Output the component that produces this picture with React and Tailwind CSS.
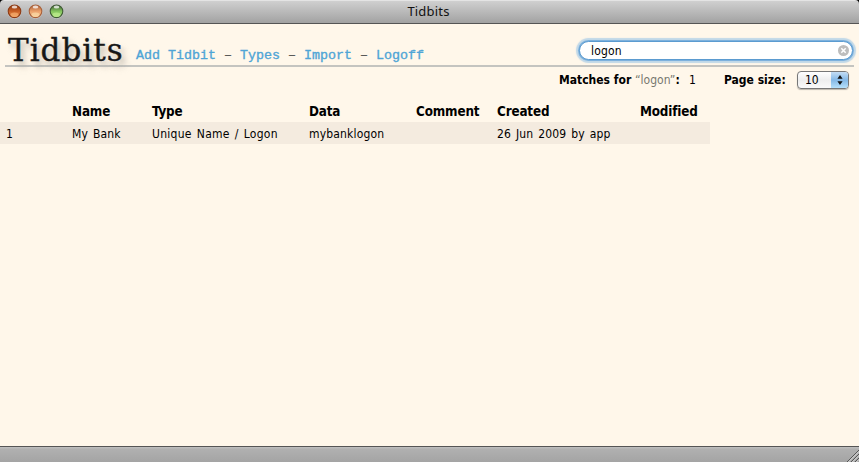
const sans = "font-['DejaVu_Sans_Condensed','DejaVu_Sans',sans-serif] [font-stretch:condensed]";

function TrafficLight({ id, rim, body, glow }) {
  return (
    <svg width="15" height="15" viewBox="0 0 15 15" className="block">
      <defs>
        <linearGradient id={id} x1="0" y1="0" x2="0" y2="1">
          <stop offset="0" stopColor={rim} />
          <stop offset="0.5" stopColor={body} />
          <stop offset="1" stopColor={glow} />
        </linearGradient>
      </defs>
      <circle cx="7.5" cy="8" r="6.8" fill="#dedede" opacity="0.7" />
      <circle cx="7.5" cy="7.3" r="6.3" fill={`url(#${id})`} stroke={rim} strokeWidth="1.1" />
      <ellipse cx="7.5" cy="3" rx="2.8" ry="1.6" fill="#fff" opacity="0.75" />
      <ellipse cx="7.5" cy="10.8" rx="3.8" ry="2.3" fill={glow} opacity="0.8" />
    </svg>
  );
}

function TitleBar() {
  return (
    <header className="relative flex h-6 shrink-0 items-center justify-center border-b border-[#555] bg-linear-to-b from-[#d2d2d2] to-[#a2a2a2] shadow-[inset_0_1px_0_#e4e4e4]">
      <div className="absolute top-[4px] left-[7px] flex gap-[6px]">
        <TrafficLight id="close" rim="#8c3a14" body="#c95f24" glow="#f2a868" />
        <TrafficLight id="minimize" rim="#a8603a" body="#eba06a" glow="#f9d4a0" />
        <TrafficLight id="zoom" rim="#3f5a35" body="#82c45c" glow="#b8ea88" />
      </div>
      <h1 className="-mt-[2px] mr-[2px] font-['Noto_Sans',sans-serif] text-[13px] leading-[22px] tracking-[0.2px] text-[#111]">Tidbits</h1>
      <svg width="4" height="4" className="absolute top-0 left-0"><path d="M0 0H4Q0 0 0 4Z" fill="#000" /></svg>
      <svg width="4" height="4" className="absolute top-0 right-0"><path d="M4 0H0Q4 0 4 4Z" fill="#000" /></svg>
    </header>
  );
}

function Banner() {
  return (
    <div className="ml-[5px] mr-[5px] flex h-[43px] shrink-0 border-b-2 border-[#c4c4c0]">
      <div className="ml-[3px] w-[128px] font-['DejaVu_Serif',serif] text-[31px] leading-[53px] tracking-[1px] whitespace-nowrap text-[#161616] [-webkit-text-stroke:0.4px_#222] [text-shadow:3px_4px_5px_#aaa59b88,5px_7px_6px_#aaa59b55]">
        Tidbits
      </div>
      <nav className="w-[443px] pt-[24px] font-['Liberation_Mono',monospace] text-[13.33px] leading-[15px] whitespace-pre text-[#4fa5d6] [-webkit-text-stroke:0.35px]">
        <a>Add Tidbit</a><span className="text-[#555]"> – </span><a>Types</a><span className="text-[#555]"> – </span><a>Import</a><span className="text-[#555]"> – </span><a>Logoff</a>
      </nav>
      <div className={`mt-[17px] -mr-1 flex h-[19px] w-[274px] shrink-0 items-center justify-between rounded-full border border-[#5b9bd0] bg-white pr-[3px] pl-[11px] shadow-[0_0_0_1px_#7db1dd,0_0_1px_3px_#a3c9e6b0] ${sans}`}>
        <span className="pt-[2px] text-[12px] leading-[17px] tracking-[0.2px]">logon</span>
        <svg width="11" height="11" viewBox="0 0 11 11">
          <circle cx="5.5" cy="5.5" r="5.5" fill="#bdbdbd" />
          <path d="M3.3 3.3 7.7 7.7M7.7 3.3 3.3 7.7" stroke="#fff" strokeWidth="1.5" />
        </svg>
      </div>
    </div>
  );
}

function Summary() {
  return (
    <div className={`flex h-[34px] shrink-0 pt-[5px] pl-[559px] text-[12px] leading-[17px] whitespace-nowrap ${sans}`}>
      <div className="w-[130px]"><b>Matches for </b><span className="text-[#77776f]">“logon”</span><b>:</b></div>
      <span className="w-[35px]">1</span>
      <b className="w-[73px]">Page size:</b>
      <div className="-mt-px flex h-[18px] w-[52px] overflow-hidden rounded-[4px] border border-[#777] bg-linear-to-b from-white via-[#eee] to-[#fafafa] shadow-[0_1px_1px_#0004]">
        <span className="w-[33px] pl-[7px] leading-[17px]">10</span>
        <div className="flex flex-1 items-center justify-center bg-linear-to-b from-[#c4ddf4] via-[#84b8e6] to-[#b5e0fb]">
          <svg width="6" height="10" viewBox="0 0 6 10"><path d="M3 0 5.6 3.8H.4ZM3 10 .4 6.2H5.6Z" fill="#111" /></svg>
        </div>
      </div>
    </div>
  );
}

const columns = "grid grid-cols-[72px_80px_157px_107px_81px_143px_70px] w-[710px] whitespace-nowrap";

function Results() {
  return (
    <div className={`flex-1 ${sans}`}>
      <div className={`${columns} h-[21px] text-[13.33px] leading-[21px] font-bold tracking-[-0.15px]`}>
        <span /><span>Name</span><span>Type</span><span>Data</span><span>Comment</span><span>Created</span><span>Modified</span>
      </div>
      <div className={`${columns} h-[22px] bg-[#f4ebdf] text-[12px] leading-[24px] tracking-[0.17px] [word-spacing:1.3px]`}>
        <span className="pl-[6px]">1</span><span>My Bank</span><span className="tracking-[0.28px]">Unique Name / Logon</span><span>mybanklogon</span><span /><span>26 Jun 2009 by app</span><span />
      </div>
    </div>
  );
}

export default function App() {
  return (
    <main className="flex h-[462px] w-[859px] flex-col overflow-hidden bg-[#fff7ea] text-black">
      <TitleBar />
      <Banner />
      <Summary />
      <Results />
      <footer className="flex h-4 shrink-0 items-end justify-end border-t border-[#555] bg-linear-to-b from-[#c0c0c0] via-[#b0b0b0] via-15% to-[#a4a4a4]">
        <svg width="12" height="12" viewBox="0 0 12 12">
          <path d="M0 12 12 0M4 12 12 4M8 12 12 8" stroke="#555" />
          <path d="M1.4 12 12 1.4M5.4 12 12 5.4M9.4 12 12 9.4" stroke="#ddd" />
        </svg>
      </footer>
    </main>
  );
}
